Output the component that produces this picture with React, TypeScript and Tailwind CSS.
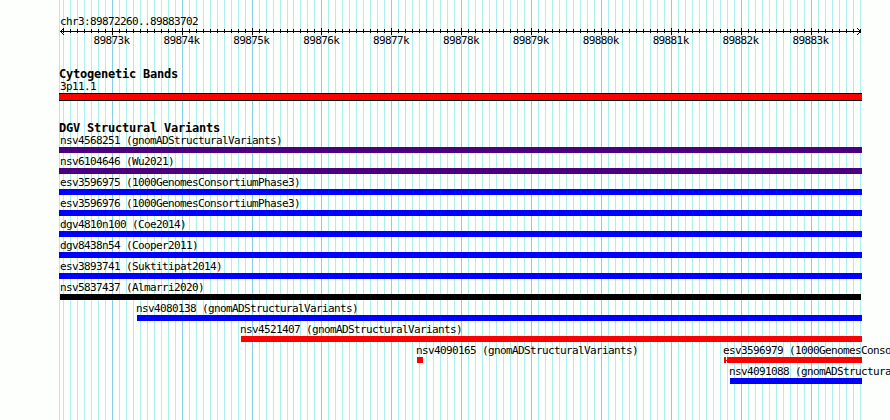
import React from "react";

const START = 89872260;
const PX_PER_BP = 0.06991;
const xOf = (bp: number) => Math.round(60 + (bp - START) * PX_PER_BP);

const ticks = Array.from({ length: 115 }, (_, i) => {
  const bp = 89872300 + i * 100;
  return { x: xOf(bp), major: bp % 1000 === 0, k: bp / 1000 };
});
const majors = ticks.filter((t) => t.major);

const variants = [
  { label: "nsv4568251 (gnomADStructuralVariants)", row: "ml-[59px]", pad: "pl-px", bar: "w-[803px] bg-[#4b0082]" },
  { label: "nsv6104646 (Wu2021)", row: "ml-[59px]", pad: "pl-px", bar: "w-[803px] bg-[#4b0082]" },
  { label: "esv3596975 (1000GenomesConsortiumPhase3)", row: "ml-[59px]", pad: "pl-px", bar: "w-[803px] bg-[#0000ff]" },
  { label: "esv3596976 (1000GenomesConsortiumPhase3)", row: "ml-[59px]", pad: "pl-px", bar: "w-[803px] bg-[#0000ff]" },
  { label: "dgv4810n100 (Coe2014)", row: "ml-[59px]", pad: "pl-px", bar: "w-[803px] bg-[#0000ff]" },
  { label: "dgv8438n54 (Cooper2011)", row: "ml-[59px]", pad: "pl-px", bar: "w-[803px] bg-[#0000ff]" },
  { label: "esv3893741 (Suktitipat2014)", row: "ml-[59px]", pad: "pl-px", bar: "w-[803px] bg-[#0000ff]" },
  { label: "nsv5837437 (Almarri2020)", row: "ml-[60px]", pad: "", bar: "w-[801px] bg-black" },
  { label: "nsv4080138 (gnomADStructuralVariants)", row: "ml-[136px]", pad: "", bar: "ml-px w-[725px] bg-[#0000ff]" },
  { label: "nsv4521407 (gnomADStructuralVariants)", row: "ml-[240px]", pad: "", bar: "ml-px w-[621px] bg-[#ff0000]" },
];

const text = "whitespace-pre font-['DejaVu_Sans_Mono',monospace] text-[11px] leading-[12px] tracking-[-0.623px]";
const heading = "ml-[59px] h-[13px] whitespace-pre font-['DejaVu_Sans_Mono',monospace] text-[12px] font-bold leading-[12px] tracking-[-0.225px]";

function Variant({ label, row, pad, bar }: { label: string; row: string; pad: string; bar: string }) {
  return (
    <div className={`h-[21px] ${row}`}>
      <div className={`h-3 ${text} ${pad}`}>{label}</div>
      <div className={`h-1.5 ${bar}`} />
    </div>
  );
}

function Grid() {
  return (
    <svg className="absolute inset-0" width="890" height="420" shapeRendering="crispEdges">
      <rect x="59" y="0" width="1" height="420" fill="#afeeee" />
      {ticks.map((t) => (
        <rect key={t.k} x={t.x} y="0" width="1" height="420" fill={t.major ? "#87ceeb" : "#afeeee"} />
      ))}
    </svg>
  );
}

function Axis() {
  return (
    <svg className="block" width="890" height="8" shapeRendering="crispEdges">
      <rect x="60" y="4" width="801" height="1" />
      {ticks.map((t) => (
        <rect key={t.k} x={t.x} y={t.major ? 1 : 2} width="1" height={t.major ? 7 : 4} />
      ))}
      {[1, 2, 3].map((d) => (
        <g key={d}>
          <rect x={60 + d} y={4 - d} width="1" height="1" />
          <rect x={60 + d} y={4 + d} width="1" height="1" />
          <rect x={860 - d} y={4 - d} width="1" height="1" />
          <rect x={860 - d} y={4 + d} width="1" height="1" />
        </g>
      ))}
    </svg>
  );
}

export default function App() {
  return (
    <div className="relative h-[420px] w-[890px] overflow-hidden bg-[#fdfffc] text-black">
      <Grid />
      <main className="relative pt-4">
        <div className={`ml-[60px] h-[11px] ${text}`}>chr3:89872260..89883702</div>
        <Axis />
        <div className="grid h-3 grid-cols-[repeat(11,69.9px)] pl-[93.5px]">
          {majors.map((t) => (
            <span key={t.k} className={text}>{t.k}k</span>
          ))}
        </div>
        <section className="pt-[21px]">
          <h2 className={heading}>Cytogenetic Bands</h2>
          <div className={`ml-[60px] h-3 ${text}`}>3p11.1</div>
          <div className="ml-[59px] h-2 w-[803px] border-y border-black bg-[#ff0000]" />
        </section>
        <section className="pt-[21px]">
          <h2 className={heading}>DGV Structural Variants</h2>
          {variants.map((v) => (
            <Variant key={v.label} {...v} />
          ))}
          <div className="flex h-[21px] pl-[416px]">
            <div className="w-[307px] shrink-0">
              <div className={`h-3 ${text}`}>nsv4090165 (gnomADStructuralVariants)</div>
              <div className="ml-px h-1.5 w-1.5 bg-[#ff0000]" />
            </div>
            <div className="shrink-0">
              <div className={`h-3 w-[167px] ${text}`}>esv3596979 (1000GenomesConsortiumPhase3)</div>
              <div className="ml-px flex h-1.5 items-center">
                <div className="h-1.5 w-0.5 bg-[#ff0000]" />
                <div className="h-px w-px bg-[#ff0000]" />
                <div className="h-1.5 w-[135px] bg-[#ff0000]" />
              </div>
            </div>
          </div>
          <Variant label="nsv4091088 (gnomADStructuralVariants)" row="ml-[729px]" pad="" bar="ml-px w-[132px] bg-[#0000ff]" />
        </section>
      </main>
    </div>
  );
}
